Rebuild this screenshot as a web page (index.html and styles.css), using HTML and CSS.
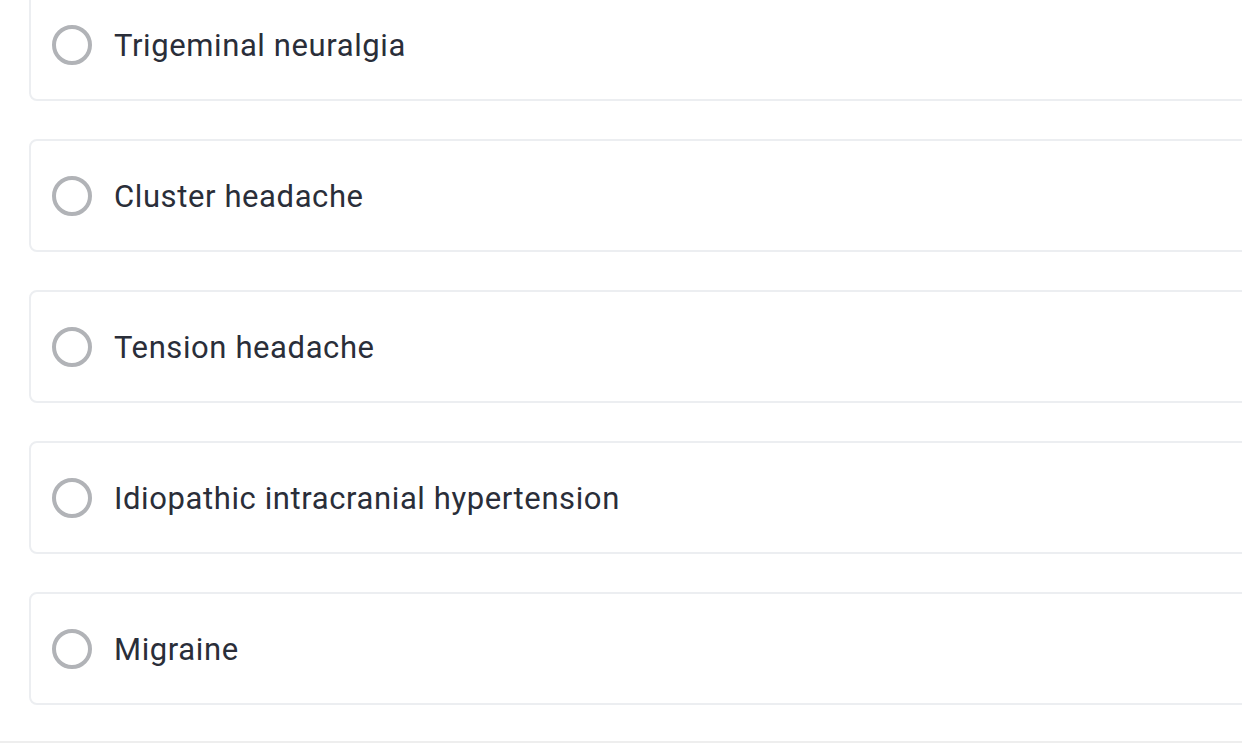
FILE: index.html
```html
<!DOCTYPE html>
<html>
<head>
<meta charset="utf-8">
<link rel="stylesheet" href="styles.css">
</head>
<body>
<div class="page">
  <div class="options">
    <label class="option"><span class="radio"></span><span class="label">Trigeminal neuralgia</span></label>
    <label class="option"><span class="radio"></span><span class="label">Cluster headache</span></label>
    <label class="option"><span class="radio"></span><span class="label">Tension headache</span></label>
    <label class="option"><span class="radio"></span><span class="label">Idiopathic intracranial hypertension</span></label>
    <label class="option"><span class="radio"></span><span class="label">Migraine</span></label>
  </div>
  <div class="divider"></div>
</div>
</body>
</html>
```
FILE: styles.css
```css
html, body {
  margin: 0;
  padding: 0;
  background: #ffffff;
  overflow: hidden;
}
.page {
  width: 1242px;
  height: 752px;
  overflow: hidden;
  font-family: Roboto, "Liberation Sans", sans-serif;
}
.options {
  display: flex;
  flex-direction: column;
  gap: 38px;
  margin-top: -12px;
  padding-left: 29px;
  margin-right: -80px;
}
.option {
  box-sizing: border-box;
  height: 113px;
  border: 2px solid #eceef1;
  border-radius: 8px;
  display: flex;
  align-items: center;
  padding-left: 21px;
  gap: 22px;
}
.radio {
  box-sizing: border-box;
  width: 40px;
  height: 40px;
  border: 4px solid #b1b3b7;
  border-radius: 50%;
  flex: none;
}
.label {
  font-size: 31px;
  color: #2a2e39;
  letter-spacing: 0.6px;
  padding-top: 2px;
}
.divider {
  margin-top: 36px;
  height: 2px;
  background: #eeeeee;
}
```
